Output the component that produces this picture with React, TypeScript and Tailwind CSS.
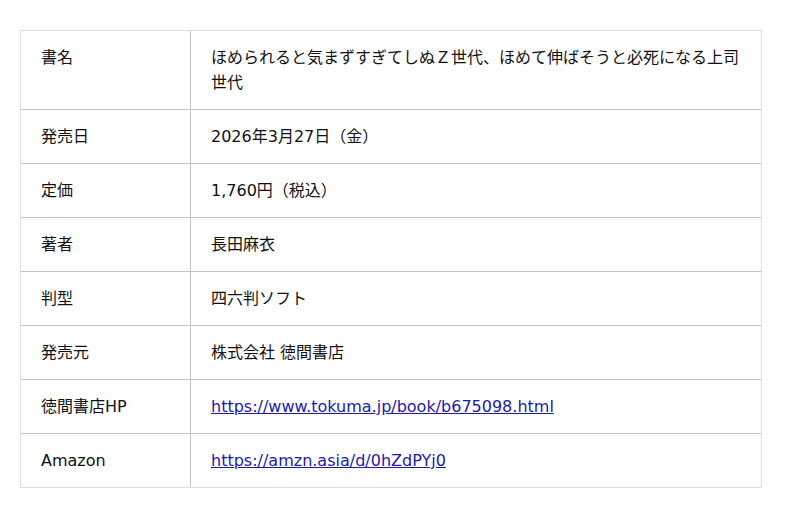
import React from 'react';

const rows: { label: string; value: string; href?: string }[] = [
  { label: '書名', value: 'ほめられると気まずすぎてしぬＺ世代、ほめて伸ばそうと必死になる上司世代' },
  { label: '発売日', value: '2026年3月27日（金）' },
  { label: '定価', value: '1,760円（税込）' },
  { label: '著者', value: '長田麻衣' },
  { label: '判型', value: '四六判ソフト' },
  { label: '発売元', value: '株式会社 徳間書店' },
  { label: '徳間書店HP', value: 'https://www.tokuma.jp/book/b675098.html', href: 'https://www.tokuma.jp/book/b675098.html' },
  { label: 'Amazon', value: 'https://amzn.asia/d/0hZdPYj0', href: 'https://amzn.asia/d/0hZdPYj0' },
];

export default function App() {
  return (
    <div
      className="w-[800px] h-[518px] bg-white pt-[30px] pl-5 text-[16px] leading-[25px] text-[#111]"
      style={{ fontFamily: '"DejaVu Sans", "Noto Sans CJK JP", sans-serif' }}
    >
      <div className="w-[742px] border border-[#dedede]">
        {rows.map((row, idx) => (
          <div key={idx} className={`flex ${idx < rows.length - 1 ? 'border-b border-[#c4c4c4]' : ''}`}>
            <div className="w-[170px] shrink-0 border-r border-[#c4c4c4] px-5 py-[14px]">{row.label}</div>
            <div className="flex-1 pl-5 pr-5 py-[14px]">
              {row.href ? (
                <a href={row.href} className="text-[#1b1ba6] underline">
                  {row.value}
                </a>
              ) : (
                row.value
              )}
            </div>
          </div>
        ))}
      </div>
    </div>
  );
}
